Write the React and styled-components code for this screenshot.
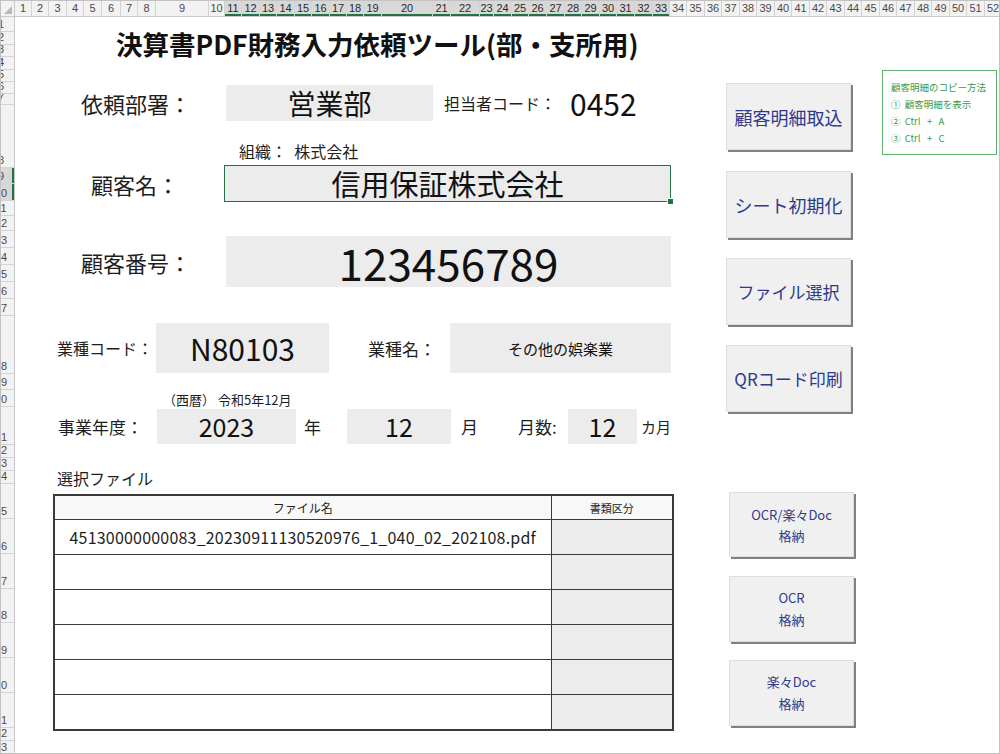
import styled, { createGlobalStyle } from 'styled-components';

const GlobalStyle = createGlobalStyle`
  html, body { margin: 0; padding: 0; background: #fff; }
  body { font-family: "Noto Sans CJK JP", "Noto Sans", sans-serif; color: #1a1a1a; }
`;

const COL_WIDTHS = [
  17, 17, 18, 17, 18, 19, 17, 18, 53, 16,
  17, 18, 17, 18, 17, 18, 17, 17, 18,
  51, 18, 29, 14,
  18, 17, 18, 18, 17, 18, 17, 18, 18, 17,
  17, 18, 17, 18, 17, 18, 17, 18, 17, 18, 17, 18, 17, 18, 17, 18, 17, 18, 17,
];

const ROW_HEIGHTS = [
  15, 13, 12, 13, 12, 12, 11, 63, 16, 17,
  15, 15, 17, 17, 17, 17, 17, 58, 16, 17,
  38, 13, 13, 13, 35, 35, 35, 34, 35, 35, 35, 13, 14,
];

const FILES = [
  '45130000000083_20230911130520976_1_040_02_202108.pdf',
  '', '', '', '', '',
];

const Frame = styled.div`
  width: 1000px;
  height: 754px;
  box-sizing: border-box;
  border: 1px solid #c2c2c2;
  display: flex;
  flex-direction: column;
  overflow: hidden;
`;

const ColHeader = styled.div`
  display: flex;
  height: 16px;
  flex: none;
  background: #f2f2f2;
  border-bottom: 1px solid #c9c9c9;
  box-sizing: border-box;
`;

const Corner = styled.div`
  width: 14px;
  flex: none;
  box-sizing: border-box;
  border-right: 1px solid #c9c9c9;
  position: relative;
  &::after {
    content: '';
    position: absolute;
    right: 2px;
    bottom: 2px;
    border-left: 8px solid transparent;
    border-bottom: 8px solid #b9b9b9;
  }
`;

const ColCell = styled.div`
  width: ${({ $w }) => $w}px;
  flex: none;
  box-sizing: border-box;
  border-right: 1px solid #d3d3d3;
  font-family: "Liberation Sans", sans-serif;
  font-size: 11px;
  line-height: 15px;
  text-align: center;
  color: ${({ $selected }) => ($selected ? '#2a2a2a' : '#4a4a4a')};
  background: ${({ $selected }) => ($selected ? '#d8d8d8' : 'transparent')};
  box-shadow: ${({ $selected }) => ($selected ? 'inset 0 -2px 0 #217346' : 'none')};
  overflow: hidden;
`;

const Body = styled.div`
  flex: 1;
  display: flex;
  min-height: 0;
`;

const RowHeader = styled.div`
  width: 14px;
  flex: none;
  display: flex;
  flex-direction: column;
  background: #f2f2f2;
  border-right: 1px solid #c9c9c9;
  box-sizing: border-box;
  overflow: hidden;
`;

const RowCell = styled.div`
  height: ${({ $h }) => $h}px;
  flex: none;
  box-sizing: border-box;
  border-bottom: 1px solid #d3d3d3;
  display: flex;
  align-items: flex-end;
  overflow: hidden;
  background: ${({ $selected }) => ($selected ? '#d8d8d8' : 'transparent')};
  box-shadow: ${({ $selected }) => ($selected ? 'inset -2px 0 0 #217346' : 'none')};
`;

const RowNum = styled.span`
  flex: none;
  width: 28px;
  margin-left: -14px;
  text-align: center;
  font-family: "Liberation Sans", sans-serif;
  font-size: 11px;
  line-height: 13px;
  color: #4a4a4a;
`;

const Sheet = styled.div`
  flex: 1;
  display: grid;
  grid-template-columns: 686px 170px 1fr;
  align-items: start;
`;

const FormPane = styled.div`
  display: flex;
  flex-direction: column;
`;

const Title = styled.h1`
  margin: 11px 0 0;
  padding-left: 101px;
  font-size: 26.5px;
  font-weight: 700;
  line-height: 32px;
  color: #111;
  white-space: nowrap;
`;

const FieldRow = styled.div`
  display: flex;
  align-items: center;
  line-height: 1;
  margin-top: ${({ $top }) => $top}px;
  padding-left: ${({ $left }) => $left}px;
`;

const Label = styled.div`
  flex: none;
  width: ${({ $w }) => ($w ? `${$w}px` : 'auto')};
  margin-left: ${({ $ml }) => $ml || 0}px;
  font-size: ${({ $size }) => $size}px;
  white-space: nowrap;
  color: #1e1e1e;
`;

const ValueBox = styled.div`
  position: relative;
  flex: none;
  width: ${({ $w }) => $w}px;
  height: ${({ $h }) => $h}px;
  box-sizing: border-box;
  background: #ececec;
  border: ${({ $active }) => ($active ? '1.5px solid #217346' : 'none')};
  display: flex;
  align-items: center;
  justify-content: center;
  font-size: ${({ $size }) => $size}px;
  color: #111;
  white-space: nowrap;
`;

const FillHandle = styled.span`
  position: absolute;
  right: -4px;
  bottom: -4px;
  width: 5px;
  height: 5px;
  background: #217346;
  border: 1px solid #fff;
`;

const BigText = styled.span`
  font-size: ${({ $size }) => $size}px;
  margin-left: ${({ $ml }) => $ml || 0}px;
  color: #111;
`;

const Caption = styled.div`
  margin-top: ${({ $top }) => $top}px;
  padding-left: ${({ $left }) => $left}px;
  font-size: ${({ $size }) => $size}px;
  line-height: ${({ $lh }) => $lh}px;
  white-space: pre;
  color: #1e1e1e;
`;

const Unit = styled.div`
  flex: none;
  width: ${({ $w }) => $w}px;
  box-sizing: border-box;
  padding-left: ${({ $pl }) => $pl}px;
  font-size: ${({ $size }) => $size}px;
  white-space: nowrap;
  color: #1e1e1e;
`;

const FileTable = styled.table`
  margin: 6px 0 0 38px;
  width: 619px;
  border-collapse: collapse;
  border: 2px solid #3a3a3a;
  table-layout: fixed;
`;

const Th = styled.th`
  height: 23px;
  padding: 0;
  border: 1px solid #3a3a3a;
  font-size: ${({ $size }) => $size}px;
  font-weight: 400;
  background: #f8f8f8;
  color: #222;
`;

const Td = styled.td`
  height: 34px;
  padding: 0;
  border: 1px solid #3a3a3a;
  text-align: center;
  font-size: 16px;
  letter-spacing: 0.2px;
  color: #1e1e1e;
  background: ${({ $shade }) => ($shade ? '#ececec' : '#fff')};
  white-space: nowrap;
  overflow: hidden;
`;

const ButtonPane = styled.div`
  display: flex;
  flex-direction: column;
`;

const SheetButton = styled.button`
  width: 125px;
  height: ${({ $h }) => $h}px;
  margin: ${({ $top }) => $top}px 0 0 ${({ $left }) => $left}px;
  padding: 0;
  box-sizing: border-box;
  background: #f0f0f0;
  border: 1px solid #dedede;
  box-shadow: 2px 2px 0 #808080;
  display: flex;
  flex-direction: column;
  align-items: center;
  justify-content: center;
  font-family: "Noto Sans CJK JP", sans-serif;
  font-size: ${({ $size }) => $size}px;
  line-height: ${({ $lh }) => $lh}px;
  color: #2d3a8c;
  cursor: pointer;
`;

const NoteBox = styled.div`
  margin: 53px 0 0 11px;
  width: 115px;
  height: 85px;
  box-sizing: border-box;
  border: 1.5px solid #5db36a;
  padding: 8px 0 0 8px;
  display: flex;
  flex-direction: column;
`;

const NoteLine = styled.div`
  font-size: 9.5px;
  line-height: 17px;
  color: #3b9a4a;
  white-space: pre;
`;

export default function App() {
  return (
    <>
      <GlobalStyle />
      <Frame>
        <ColHeader>
          <Corner />
          {COL_WIDTHS.map((w, i) => (
            <ColCell key={i} $w={w} $selected={i + 1 >= 11 && i + 1 <= 33}>
              {i + 1}
            </ColCell>
          ))}
        </ColHeader>
        <Body>
          <RowHeader>
            {ROW_HEIGHTS.map((h, i) => (
              <RowCell key={i} $h={h} $selected={i + 1 === 9 || i + 1 === 10}>
                <RowNum>{i + 1}</RowNum>
              </RowCell>
            ))}
          </RowHeader>
          <Sheet>
            <FormPane>
              <Title>決算書PDF財務入力依頼ツール(部・支所用)</Title>

              <FieldRow $top={25} $left={66}>
                <Label $w={145} $size={22}>依頼部署：</Label>
                <ValueBox $w={207} $h={36} $size={28}>営業部</ValueBox>
                <Label $ml={11} $size={16}>担当者コード：</Label>
                <BigText $size={30} $ml={14}>0452</BigText>
              </FieldRow>

              <Caption $top={20} $left={224} $size={16} $lh={20}>{'組織：  株式会社'}</Caption>

              <FieldRow $top={4} $left={76}>
                <Label $w={133} $size={22}>顧客名：</Label>
                <ValueBox $w={447} $h={37} $size={29} $active>
                  信用保証株式会社
                  <FillHandle />
                </ValueBox>
              </FieldRow>

              <FieldRow $top={34} $left={66}>
                <Label $w={145} $size={22}>顧客番号：</Label>
                <ValueBox $w={445} $h={51} $size={44}>123456789</ValueBox>
              </FieldRow>

              <FieldRow $top={36} $left={42}>
                <Label $w={99} $size={16}>業種コード：</Label>
                <ValueBox $w={173} $h={50} $size={30}>N80103</ValueBox>
                <Label $w={82} $ml={39} $size={17}>業種名：</Label>
                <ValueBox $w={221} $h={50} $size={15}>その他の娯楽業</ValueBox>
              </FieldRow>

              <Caption $top={19} $left={148} $size={13} $lh={16}>（西暦） 令和5年12月</Caption>

              <FieldRow $top={1} $left={43}>
                <Label $w={99} $size={17}>事業年度：</Label>
                <ValueBox $w={139} $h={35} $size={25}>2023</ValueBox>
                <Unit $w={51} $pl={8} $size={17}>年</Unit>
                <ValueBox $w={104} $h={35} $size={25}>12</ValueBox>
                <Unit $w={67} $pl={10} $size={17}>月</Unit>
                <Unit $w={50} $pl={0} $size={17}>月数:</Unit>
                <ValueBox $w={69} $h={35} $size={25}>12</ValueBox>
                <Unit $w={40} $pl={4} $size={15}>カ月</Unit>
              </FieldRow>

              <Caption $top={24} $left={42} $size={16} $lh={20}>選択ファイル</Caption>

              <FileTable>
                <colgroup>
                  <col style={{ width: 497 }} />
                  <col style={{ width: 122 }} />
                </colgroup>
                <thead>
                  <tr>
                    <Th $size={12}>ファイル名</Th>
                    <Th $size={11}>書類区分</Th>
                  </tr>
                </thead>
                <tbody>
                  {FILES.map((f, i) => (
                    <tr key={i}>
                      <Td>{f}</Td>
                      <Td $shade />
                    </tr>
                  ))}
                </tbody>
              </FileTable>
            </FormPane>

            <ButtonPane>
              <SheetButton $top={66} $left={25} $h={67} $size={18} $lh={24}>顧客明細取込</SheetButton>
              <SheetButton $top={21} $left={25} $h={67} $size={18} $lh={24}>シート初期化</SheetButton>
              <SheetButton $top={20} $left={25} $h={67} $size={17} $lh={24}>ファイル選択</SheetButton>
              <SheetButton $top={20} $left={25} $h={67} $size={17} $lh={24}>QRコード印刷</SheetButton>
              <SheetButton $top={80} $left={28} $h={65} $size={13} $lh={21}>
                <span>OCR/楽々Doc</span>
                <span>格納</span>
              </SheetButton>
              <SheetButton $top={19} $left={28} $h={66} $size={13} $lh={22}>
                <span>OCR</span>
                <span>格納</span>
              </SheetButton>
              <SheetButton $top={18} $left={28} $h={66} $size={13} $lh={22}>
                <span>楽々Doc</span>
                <span>格納</span>
              </SheetButton>
            </ButtonPane>

            <NoteBox>
              <NoteLine>顧客明細のコピー方法</NoteLine>
              <NoteLine>①  顧客明細を表示</NoteLine>
              <NoteLine>②  Ctrl   +   A</NoteLine>
              <NoteLine>③  Ctrl   +   C</NoteLine>
            </NoteBox>
          </Sheet>
        </Body>
      </Frame>
    </>
  );
}
